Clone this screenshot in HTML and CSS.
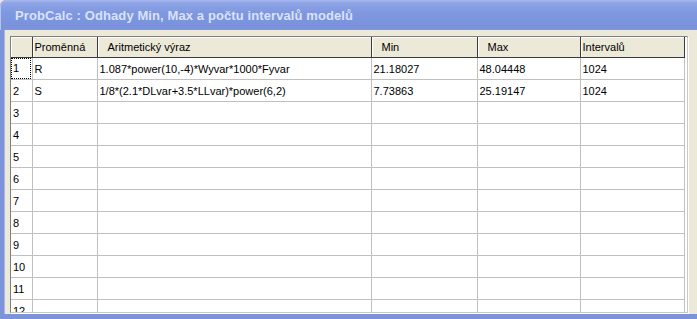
FILE: index.html
```html
<!DOCTYPE html>
<html>
<head>
	<title>ProbCalc</title>
	<link rel="stylesheet" href="styles.css">
</head>
<body>
	<div class="window">
		<div class="titlebar">ProbCalc : Odhady Min, Max a počtu intervalů modelů</div>
		<div class="client">
			<div class="grid">
				<table>
					<colgroup>
						<col class="c-fix">
						<col class="c-var">
						<col class="c-expr">
						<col class="c-min">
						<col class="c-max">
						<col class="c-int">
					</colgroup>
					<tr class="head">
						<th></th>
						<th>Proměnná</th>
						<th class="indent">Aritmetický výraz</th>
						<th class="indent">Min</th>
						<th class="indent">Max</th>
						<th>Intervalů</th>
					</tr>
					<tr><td class="fix"><span class="focus">1</span></td><td>R</td><td>1.087*power(10,-4)*Wyvar*1000*Fyvar</td><td>21.18027</td><td>48.04448</td><td>1024</td></tr>
					<tr><td class="fix">2</td><td>S</td><td>1/8*(2.1*DLvar+3.5*LLvar)*power(6,2)</td><td>7.73863</td><td>25.19147</td><td>1024</td></tr>
					<tr><td class="fix">3</td><td></td><td></td><td></td><td></td><td></td></tr>
					<tr><td class="fix">4</td><td></td><td></td><td></td><td></td><td></td></tr>
					<tr><td class="fix">5</td><td></td><td></td><td></td><td></td><td></td></tr>
					<tr><td class="fix">6</td><td></td><td></td><td></td><td></td><td></td></tr>
					<tr><td class="fix">7</td><td></td><td></td><td></td><td></td><td></td></tr>
					<tr><td class="fix">8</td><td></td><td></td><td></td><td></td><td></td></tr>
					<tr><td class="fix">9</td><td></td><td></td><td></td><td></td><td></td></tr>
					<tr><td class="fix">10</td><td></td><td></td><td></td><td></td><td></td></tr>
					<tr><td class="fix">11</td><td></td><td></td><td></td><td></td><td></td></tr>
					<tr><td class="fix">12</td><td></td><td></td><td></td><td></td><td></td></tr>
				</table>
			</div>
		</div>
	</div>
</body>
</html>
```

FILE: styles.css
```css
body {
	margin: 0;
	width: 697px;
	height: 319px;
	overflow: hidden;
	background: #ece9d8;
	font-family: "Liberation Sans", Arial, sans-serif;
}

.window {
	height: 319px;
	box-sizing: border-box;
	display: flex;
	flex-direction: column;
	background: #7c93dc;
	border-radius: 6px 0 0 0;
	padding: 0 0 5px 4px;
}

.titlebar {
	height: 30px;
	line-height: 31px;
	padding-left: 15px;
	margin-left: -4px;
	color: #d9e2f8;
	font-family: "Liberation Sans", Arial, sans-serif;
	font-weight: bold;
	font-size: 13px;
	letter-spacing: 0.1px;
	border-radius: 6px 0 0 0;
	background: linear-gradient(to bottom, #a9b9ee 0px, #8ea4e6 3px, #7f98e0 12px, #7a92dc 26px, #7c95de 30px);
	box-shadow: inset 1px 0 0 #b4c3f0;
}

.client {
	flex: 1;
	background: #ece9d8;
	border-left: 1px solid #a7b6ea;
	padding: 6px 0 2px 5px;
	overflow: hidden;
}

.grid {
	width: 676px;
	height: 275px;
	overflow: hidden;
	background: #fff;
	border-top: 1px solid #7f7f7f;
	border-left: 1px solid #7f7f7f;
	border-right: 1px solid #c8c8c8;
	border-bottom: 1px solid #c8c8c8;
	box-shadow: 1px 1px 0 #fff;
}

table {
	border-collapse: collapse;
	table-layout: fixed;
	width: 673px;
	font-size: 11px;
	color: #000;
}

.c-fix { width: 21px; }
.c-var { width: 65px; }
.c-expr { width: 274px; }
.c-min { width: 106px; }
.c-max { width: 103px; }
.c-int { width: 104px; }

th {
	height: 20px;
	padding: 0 0 0 2px;
	text-align: left;
	font-weight: normal;
	background: #ece9d8;
	border-right: 1px solid #3a3a3a;
	border-bottom: 1px solid #3a3a3a;
	box-shadow: inset 1px 1px 0 #fff;
	white-space: nowrap;
}

th.indent {
	padding-left: 10px;
}

td {
	height: 21px;
	padding: 0 0 0 2px;
	border-right: 1px solid #c0c0c0;
	border-bottom: 1px solid #c0c0c0;
	white-space: nowrap;
	overflow: hidden;
}

td.fix {
	padding-left: 2px;
}

.focus {
	display: inline-block;
	line-height: 19px;
	width: 17px;
	margin-left: -1px;
	padding-left: 1px;
	outline: 1px dotted #000;
}
```
